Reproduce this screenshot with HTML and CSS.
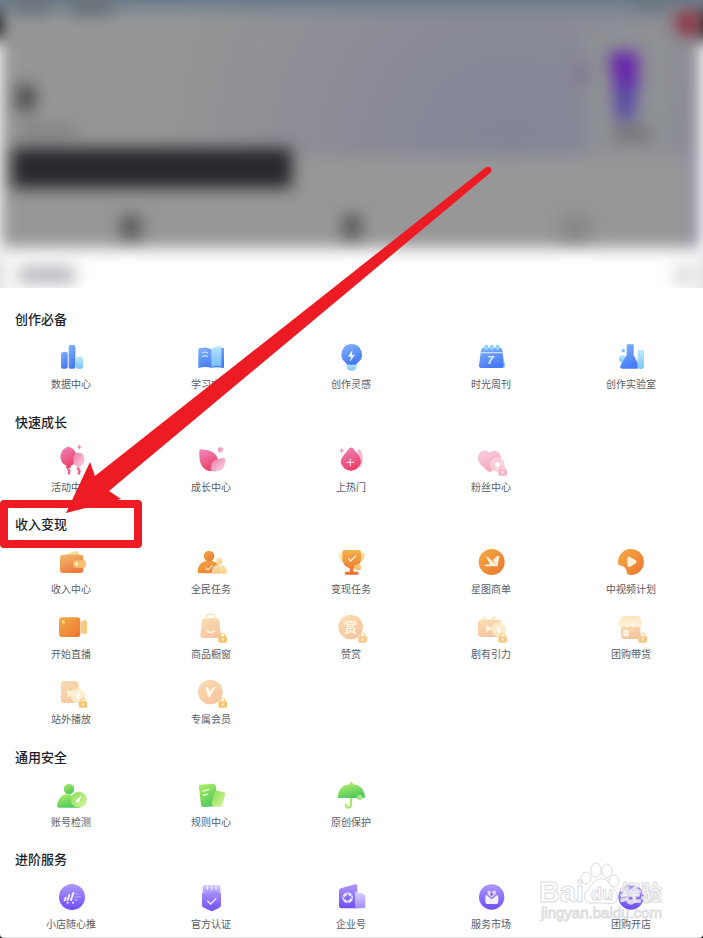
FILE: index.html
```html
<!DOCTYPE html>
<html lang="zh-CN">
<head>
<meta charset="utf-8">
<meta name="viewport" content="width=device-width, initial-scale=1">
<title>创作者服务中心</title>
<link rel="stylesheet" href="styles.css">
</head>
<body>
<svg class="defs" aria-hidden="true">
  <defs>
    <linearGradient id="blue" x1="0" y1="0" x2=".4" y2="1"><stop offset="0" stop-color="#86b4fb"/><stop offset="1" stop-color="#467bf6"/></linearGradient>
    <linearGradient id="sky" x1="0" y1="0" x2="0" y2="1"><stop offset="0" stop-color="#bfeafe"/><stop offset="1" stop-color="#79c3fc"/></linearGradient>
    <linearGradient id="pink" x1="0" y1="0" x2=".4" y2="1"><stop offset="0" stop-color="#ee8abf"/><stop offset="1" stop-color="#ee4069"/></linearGradient>
    <linearGradient id="rose" x1="0" y1="0" x2="1" y2="1"><stop offset="0" stop-color="#ee75a4"/><stop offset="1" stop-color="#fadbe8"/></linearGradient>
    <linearGradient id="blush" x1="0" y1="0" x2=".4" y2="1"><stop offset="0" stop-color="#f6cde2"/><stop offset="1" stop-color="#f6a9bd"/></linearGradient>
    <linearGradient id="orange" x1="0" y1="0" x2="1" y2="1"><stop offset="0" stop-color="#f3ac45"/><stop offset="1" stop-color="#ec7430"/></linearGradient>
    <linearGradient id="wallet" x1="0" y1="0" x2=".5" y2="1"><stop offset="0" stop-color="#efbc6d"/><stop offset="1" stop-color="#f07a42"/></linearGradient>
    <linearGradient id="cup" x1="0" y1="0" x2="0" y2="1"><stop offset="0" stop-color="#f3b34d"/><stop offset="1" stop-color="#ef6b2f"/></linearGradient>
    <linearGradient id="cream" x1="0" y1="0" x2="1" y2="1"><stop offset="0" stop-color="#fff0c7"/><stop offset="1" stop-color="#f5c875"/></linearGradient>
    <linearGradient id="peach" x1="0" y1="0" x2=".5" y2="1"><stop offset="0" stop-color="#f9deb0"/><stop offset="1" stop-color="#f5c6a2"/></linearGradient>
    <linearGradient id="pale" x1="0" y1="0" x2="0" y2="1"><stop offset="0" stop-color="#fbe4bb"/><stop offset="1" stop-color="#fff4e4"/></linearGradient>
    <linearGradient id="green" x1="0" y1="0" x2=".5" y2="1"><stop offset="0" stop-color="#b4ee67"/><stop offset="1" stop-color="#50c95f"/></linearGradient>
    <linearGradient id="lime" x1="0" y1="0" x2="1" y2="1"><stop offset="0" stop-color="#8bdc58"/><stop offset="1" stop-color="#d6f79a"/></linearGradient>
    <linearGradient id="violet" x1="0" y1="0" x2="0" y2="1"><stop offset="0" stop-color="#ad98fb"/><stop offset="1" stop-color="#6f4cf5"/></linearGradient>
    <linearGradient id="lilac" x1="0" y1="0" x2="0" y2="1"><stop offset="0" stop-color="#dcd2ff"/><stop offset="1" stop-color="#a38cfb"/></linearGradient>
    <symbol id="lock" viewBox="0 0 28 32"><path d="M8 13V8a6 6 0 0 1 12 0v5" fill="none" stroke="currentColor" stroke-width="3"/><rect x="1" y="12" width="26" height="19" rx="4" fill="currentColor"/><path d="M14 18v8M12 20h4" stroke="#fff" stroke-width="2.5"/></symbol>
    <radialGradient id="glow" gradientUnits="userSpaceOnUse" cx="510" cy="150" r="360" ><stop offset="0" stop-color="#838597"/><stop offset=".45" stop-color="#8a8b96"/><stop offset="1" stop-color="#969696"/></radialGradient>
    <linearGradient id="topbar" x1="0" y1="0" x2="0" y2="1"><stop offset="0" stop-color="#6c7c8a"/><stop offset="1" stop-color="#7e8892" stop-opacity="0"/></linearGradient>
    <filter id="soft" x="-20%" y="-20%" width="140%" height="140%" color-interpolation-filters="sRGB"><feGaussianBlur stdDeviation="8"/></filter>
    <filter id="mid" x="-10%" y="-30%" width="120%" height="160%" color-interpolation-filters="sRGB"><feGaussianBlur stdDeviation="8"/></filter>
  </defs>
</svg>

<div class="page">
<header class="backdrop" aria-hidden="true">
  <svg viewBox="0 0 703 288" preserveAspectRatio="none">
    <rect width="703" height="288" fill="#fff"/>
    <g filter="url(#soft)">
      <path d="M-30-30H733V40H-30z" fill="#101010"/>
      <path d="M-30 40H733V310H-30z" fill="#fff"/>
      <path d="M1-30H700V248H1z" fill="#979797"/>
      <path d="M1-30H700V156H1z" fill="url(#glow)"/>
      <path d="M588 26H672V156H588z" fill="#8e9195"/>
      <path d="M686 150h14V248h-14z" fill="#9090a4"/>
      <path d="M-30 256H4V310H-30zM699 256h30v54h-30z" fill="#ddd"/>
    </g>
    <rect width="703" height="24" fill="url(#topbar)"/>
    <g filter="url(#mid)">
      <rect x="12" y="148" width="280" height="40" rx="3" fill="#26282c"/>
      <path d="M17 85H35V111H17z" fill="#4a4a4a"/>
      <path d="M20 125H76V138H20z" fill="#808080"/>
      <path d="M15 0H50V12H15zM70 0H112V14H70z" fill="#666d71"/>
      <path d="M636 0H670V9H636z" fill="#68707a"/>
      <circle cx="688" cy="23" r="13" fill="#8f3040"/>
      <path d="M609 52H638V82L632 120H617L614 82z" fill="#6522ae"/>
      <path d="M617 84H634V120H617z" fill="#5348a6"/>
      <path d="M574 66H588V80H574z" fill="#806f8d"/>
      <path d="M614 126H650V141H614z" fill="#747477"/>
      <path d="M121 216H141V238H121zM343 215H361V238H343z" fill="#555"/>
      <path d="M560 216H590V238H560z" fill="#858585"/>
      <path d="M18 266H75V284H18z" fill="#b8b8be"/>
      <path d="M674 266H694V284H674z" fill="#d8d8d8"/>
    </g>
  </svg>
</header>

<main class="services">
  <section class="group">
    <h2>创作必备</h2>
    <div class="grid">
      <a class="item" href="#data"><svg viewBox="0 0 96 96"><rect x="18" y="33" width="20" height="50" rx="5" fill="url(#blue)"/><rect x="41" y="12" width="20" height="71" rx="5" fill="url(#blue)"/><rect x="63" y="47" width="21" height="36" rx="5" fill="url(#sky)"/></svg><span>数据中心</span></a>
      <a class="item" href="#learn"><svg viewBox="0 0 96 96"><path d="M10 27q0-5 5-6 22-5 34 4 12-7 38-4v60q-26-5-38 0-14-6-39 0z" fill="url(#blue)"/><path d="M49 25Q59 13 79 14v62q-20-5-30 5z" fill="url(#sky)" opacity=".9"/><path d="M22 35q8-5 16 0M22 46q8-4 16 0" fill="none" stroke="#dceaff" stroke-width="3" stroke-linecap="round"/></svg><span>学习中心</span></a>
      <a class="item" href="#ideas"><svg viewBox="0 0 96 96"><path d="M35 67h30v8q0 14-15 14T35 75z" fill="url(#sky)"/><path d="M50 9a31 31 0 0 1 18 56q-3 6-8 6H40q-5 0-8-6A31 31 0 0 1 50 9z" fill="url(#blue)"/><path d="M52 27 39 47h9l-3 15 15-21h-9z" fill="#e6f5ff"/></svg><span>创作灵感</span></a>
      <a class="item" href="#weekly"><svg viewBox="0 0 96 96"><path d="M73 22h7l10 51q1 8-7 8H73z" fill="url(#sky)"/><path d="M18 28q1-8 8-8h47q8 0 9 8l4 45q1 8-7 8H19q-8 0-7-8z" fill="url(#blue)"/><path d="M17 35h66" stroke="#d9eaff" stroke-width="3"/><g fill="#8fd3fb"><rect x="28" y="11" width="11" height="17" rx="5"/><rect x="45" y="11" width="11" height="17" rx="5"/><rect x="62" y="11" width="11" height="17" rx="5"/></g><text x="46" y="70" class="glyph glyph-seven">7</text></svg><span>时光周刊</span></a>
      <a class="item" href="#lab"><svg viewBox="0 0 96 96"><circle cx="25" cy="29" r="5" fill="#77bff8"/><circle cx="23" cy="53" r="11" fill="url(#sky)"/><path d="M35 10h21v32l15 31q3 10-6 10H22q-10 0-5-10l18-31z" fill="url(#blue)"/><path d="M68 27h19v48q0 9-10 9t-10-9z" fill="url(#sky)"/></svg><span>创作实验室</span></a>
    </div>
  </section>

  <section class="group">
    <h2>快速成长</h2>
    <div class="grid">
      <a class="item" href="#events"><svg viewBox="0 0 96 96"><path d="M41 65q-5 7 0 12t-1 14M71 65q-5 7 0 12t-1 14" fill="none" stroke="#ef6489" stroke-width="7"/><path d="M40 8a28 30 0 0 1 6 58l3 5H32l3-5A28 30 0 0 1 40 8z" fill="url(#pink)"/><path d="M72 26a18 21 0 0 1 4 41l2 4H65l2-4a18 21 0 0 1 5-41z" fill="url(#rose)"/><path d="m73 1 2 6 6 2-6 2-2 6-2-6-6-2 6-2z" fill="#ed75a4"/></svg><span>活动中心</span></a>
      <a class="item" href="#growth"><svg viewBox="0 0 96 96"><path d="M13 22q0-7 7-6 43 4 48 29 4 31-18 37-40-1-37-60z" fill="url(#pink)"/><path d="M90 42q4 38-27 40-13 3-16-8-2-30 43-32z" fill="url(#rose)"/><circle cx="77" cy="18" r="8" fill="url(#rose)"/></svg><span>成长中心</span></a>
      <a class="item" href="#hot"><svg viewBox="0 0 96 96"><path d="M68 17q8-4 12 7 8 24-3 46H64z" fill="#f5bdd0"/><path d="M43 13q5-5 11 0c8 11 24 25 24 41a31 32 0 0 1-61 0c0-15 18-29 26-41z" fill="url(#pink)"/><path d="M46 45v20M36 55h20" stroke="#ffd8e8" stroke-width="3.5" stroke-linecap="round"/><path d="m20 11 2 7 6 2-6 2-2 7-2-7-6-2 6-2z" fill="#ed8caa"/></svg><span>上热门</span></a>
      <a class="item" href="#fans"><svg viewBox="0 0 96 96"><path d="M44 26c17-14 35 0 34 18-2 18-19 30-29 38q-5 4-10 0C27 71 9 60 9 42c0-19 20-30 35-16z" fill="url(#blush)"/><circle cx="67" cy="62" r="22" fill="#f9cfdb" opacity=".9"/><circle cx="67" cy="62" r="7" fill="#fff"/><use href="#lock" x="69" y="64" width="28" height="32" color="#f8b5c4"/></svg><span>粉丝中心</span></a>
    </div>
  </section>

  <section class="group">
    <h2 class="marked">收入变现</h2>
    <div class="grid">
      <a class="item" href="#income"><svg viewBox="0 0 96 96"><path d="m25 28 35-13q6-2 9 4l5 12H25z" fill="url(#cream)"/><rect x="15" y="26" width="70" height="55" rx="9" fill="url(#wallet)"/><rect x="54" y="43" width="39" height="22" rx="8" fill="#f6bf72"/><circle cx="65" cy="54" r="5" fill="#fff0cf"/></svg><span>收入中心</span></a>
      <a class="item" href="#tasks"><svg viewBox="0 0 96 96"><path d="M34 44h16q26 7 26 33 0 5-5 5H13q-5 0-5-5 0-28 26-33z" fill="url(#orange)"/><circle cx="42" cy="30" r="16" fill="url(#orange)"/><circle cx="72" cy="45" r="10" fill="url(#cream)"/><path d="M50 80q2-24 22-25 24 3 24 25 0 3-4 3H53z" fill="url(#cream)" opacity=".9"/><path d="m31 65 8 7 14-14" fill="none" stroke="#ffe0b9" stroke-width="4"/></svg><span>全民任务</span></a>
      <a class="item" href="#earn"><svg viewBox="0 0 96 96"><path d="M24 20H11q-1 25 19 31zM76 20h13q1 25-19 31z" fill="url(#cream)"/><path d="M22 18q0-6 6-6h44q6 0 6 6v21q-1 20-22 28v10h10q5 0 5 5t-5 4H34q-5 0-5-4 0-5 5-5h10V67Q23 60 22 39z" fill="url(#cup)"/><path d="m39 37 8 8 15-15" fill="none" stroke="#fff0d7" stroke-width="4"/><path d="m69 52 4 5 6 1-2 6 2 6-6 1-5 5-4-5-6-1 1-6-2-6 7-1z" fill="#f9c66e"/></svg><span>变现任务</span></a>
      <a class="item" href="#star"><svg viewBox="0 0 96 96"><circle cx="50" cy="48" r="39" fill="url(#orange)"/><path d="M34 34q0-4 4-2l24 23 3-23 6-3q3 0 2 3l-5 24 1 5H29q-2-4 2-5l14-2z" fill="#fff0dc"/><path d="m53 42 15-13 3 1-7 27z" fill="#fff0dc"/></svg><span>星图商单</span></a>
      <a class="item" href="#video"><svg viewBox="0 0 96 96"><path d="M9 51a39 39 0 1 1 38 36q-10 0-12-8 0-17-17-20-8 0-9-8z" fill="url(#orange)"/><path d="M37 36q0-6 6-4l18 10q7 5 0 11L45 62q-9 4-8-7z" fill="#fff0dc"/></svg><span>中视频计划</span></a>
      <a class="item" href="#live"><svg viewBox="0 0 96 96"><path d="m78 32 12-5q6 0 6 6v31q0 7-7 5l-11-4z" fill="#f6cb80"/><rect x="12" y="19" width="64" height="59" rx="10" fill="url(#orange)"/><circle cx="25" cy="33" r="5" fill="#fbd18a"/></svg><span>开始直播</span></a>
      <a class="item" href="#shop"><svg viewBox="0 0 96 96"><path d="M21 29q1-7 9-7h35q7 0 8 7l5 43q1 9-8 9H24q-9 0-8-9z" fill="url(#peach)"/><path d="M33 32v-9a14 14 0 0 1 28 0v9" fill="none" stroke="#fae3b7" stroke-width="5"/><path d="M36 59q11 10 23 0" fill="none" stroke="#fff6e8" stroke-width="4" stroke-linecap="round"/><use href="#lock" x="69" y="64" width="28" height="32" color="#f6c66f"/></svg><span>商品橱窗</span></a>
      <a class="item" href="#tips"><svg viewBox="0 0 96 96"><circle cx="47" cy="48" r="37" fill="url(#peach)"/><text x="47" y="63" class="glyph glyph-reward">赏</text><use href="#lock" x="69" y="64" width="28" height="32" color="#f9c887"/></svg><span>赞赏</span></a>
      <a class="item" href="#drama"><svg viewBox="0 0 96 96"><path d="M20 18q3-5 8 0l10 13H28zM44 30l11-14q6-2 7 4l-8 12z" fill="#fce7c1"/><rect x="9" y="26" width="69" height="52" rx="9" fill="url(#peach)"/><path d="m33 41 22 11-22 11z" fill="#fff0d6"/><circle cx="71" cy="55" r="22" fill="#fcebc8" opacity=".93"/><text x="71" y="65" class="glyph glyph-yuan">¥</text><use href="#lock" x="69" y="64" width="28" height="32" color="#f9c887"/></svg><span>剧有引力</span></a>
      <a class="item" href="#groupbuy"><svg viewBox="0 0 96 96"><rect x="18" y="38" width="58" height="46" rx="8" fill="url(#peach)"/><path d="M17 23q3-8 11-8h38q8 0 11 8 12 24-2 26-7 0-10-4-4 4-9 4t-9-4q-4 4-9 4t-10-4q-5 4-10 4-17-3-1-26z" fill="url(#pale)"/><rect x="25" y="57" width="17" height="19" rx="4" fill="#fff2dc"/><use href="#lock" x="69" y="64" width="28" height="32" color="#f9c887"/></svg><span>团购带货</span></a>
      <a class="item" href="#offsite"><svg viewBox="0 0 96 96"><rect x="18" y="15" width="53" height="66" rx="9" fill="url(#peach)"/><path d="M36 39q9 11 21 1v24q-13-9-21 2z" fill="#fff0d6"/><circle cx="69" cy="60" r="22" fill="#fcefce" opacity=".95"/><text x="69" y="69" class="glyph glyph-yuan">¥</text><use href="#lock" x="70" y="64" width="28" height="32" color="#f6c66f"/></svg><span>站外播放</span></a>
      <a class="item" href="#member"><svg viewBox="0 0 96 96"><circle cx="46" cy="48" r="37" fill="url(#peach)"/><path d="M31 35q6-5 10 3l4 9q7-15 19-14-7 5-18 29-4 4-7-1z" fill="#fff8eb"/><use href="#lock" x="69" y="64" width="28" height="32" color="#f6c66f"/></svg><span>专属会员</span></a>
    </div>
  </section>

  <section class="group">
    <h2>通用安全</h2>
    <div class="grid">
      <a class="item" href="#account"><svg viewBox="0 0 96 96"><path d="M33 45q20 0 42 23v18H12q-6 0-6-6 3-28 27-35z" fill="url(#green)"/><circle cx="42" cy="30" r="16" fill="url(#green)"/><circle cx="71" cy="62" r="23" fill="url(#lime)" stroke="#ace968" stroke-width="2"/><path d="m80 49-16 14a5 5 0 1 0 9 4z" fill="#fff"/></svg><span>账号检测</span></a>
      <a class="item" href="#rules"><svg viewBox="0 0 96 96"><path d="M12 26q-2-8 6-9l30-3q14 0 15 10l5 51q0 7-8 7l-34 2q-7 0-8-7z" fill="url(#green)"/><path d="M59 40q2-6 8-5l18 4q7 2 5 9l-8 29q-2 8-10 7l-16-3q-8-2-6-9z" fill="url(#lime)"/><path d="m24 36 17-4M25 49l12-3" stroke="#e6ffcc" stroke-width="4" stroke-linecap="round"/></svg><span>规则中心</span></a>
      <a class="item" href="#original"><svg viewBox="0 0 96 96"><circle cx="49" cy="14" r="5" fill="#a9e77f"/><path d="M48 52v25q-1 9-8 9t-7-8" fill="none" stroke="#a7e66f" stroke-width="7" stroke-linecap="round"/><path d="M8 54Q12 16 49 16t41 38q0 3-4 3H12q-4 0-4-3z" fill="url(#green)"/><circle cx="74" cy="55" r="8" fill="#a7e77b"/></svg><span>原创保护</span></a>
    </div>
  </section>

  <section class="group">
    <h2>进阶服务</h2>
    <div class="grid">
      <a class="item" href="#promote"><svg viewBox="0 0 96 96"><circle cx="51" cy="48" r="39" fill="url(#violet)"/><path d="m32 50-3 8M43 42l-5 15M55 36 48 57" stroke="#f1eeff" stroke-width="6" stroke-linecap="round"/><path d="M61 39h9M59 48h18M57 57h11" stroke="#c7baff" stroke-width="3"/><circle cx="38" cy="65" r="3" fill="#f1eeff"/><circle cx="54" cy="65" r="3" fill="#f1eeff"/></svg><span>小店随心推</span></a>
      <a class="item" href="#verify"><svg viewBox="0 0 96 96"><path d="m39 29 11-3 11 3q8 4 17 6v39q-1 5-11 9l-17 8-17-8q-11-4-12-9V35q9-1 18-6z" fill="url(#violet)"/><path d="M23 16q0-4 4-4h45q4 0 4 4v17q-12-2-17 3H40q-6-5-17-3z" fill="url(#lilac)"/><path d="M37 16v10M50 16v10M63 16v10" stroke="#fff" stroke-width="3"/><path d="m37 59 10 10 17-17" fill="none" stroke="#efebff" stroke-width="4"/></svg><span>官方认证</span></a>
      <a class="item" href="#company"><svg viewBox="0 0 96 96"><path d="M12 29q0-5 5-7l43-12q7-1 7 5v67H19q-7 0-7-7z" fill="url(#violet)"/><path d="M60 35q0-4 4-3l21 6q6 2 6 8v30q0 6-6 6H60z" fill="url(#lilac)"/><circle cx="38" cy="50" r="12" fill="none" stroke="#eeeaff" stroke-width="8"/><path d="m23 47 8 3-5 7M53 53l-8-4 5-6M36 34l4 8M40 66l-4-8" fill="none" stroke="#8d6ef8" stroke-width="3"/></svg><span>企业号</span></a>
      <a class="item" href="#market"><svg viewBox="0 0 96 96"><circle cx="50" cy="48" r="38" fill="url(#violet)"/><path d="M31 47q0-5 5-4l14 12 15-12q5-1 5 4v16q0 6-6 6H37q-6 0-6-6z" fill="#f2edff"/><path d="M38 28q7 3 12 5 7-4 12-5v12L50 50 38 40z" fill="#e1d8ff"/><path d="m50 34 5 6-5 6-5-6z" fill="#7c5cf6"/></svg><span>服务市场</span></a>
      <a class="item" href="#openshop"><svg viewBox="0 0 96 96"><circle cx="48" cy="48" r="38" fill="url(#violet)"/><path d="M28 30h40l5 16H23z" fill="#f2edff"/><circle cx="48" cy="56" r="12" fill="none" stroke="#d9ceff" stroke-width="6"/></svg><span>团购开店</span></a>
    </div>
  </section>
</main>

<svg class="arrow" viewBox="0 0 500 520" aria-hidden="true"><path d="M66 513 90 462 95 476 485 168Q488 165 491 168 492 171 490 173L109 491 121 499z" fill="#ed1c24"/></svg>

<svg class="watermark" viewBox="0 0 130 64" role="img" aria-label="Baidu 经验">
  <g class="wm-shape"><ellipse cx="48" cy="19" rx="5" ry="6"/><ellipse cx="58" cy="11" rx="5" ry="7"/><ellipse cx="69" cy="12" rx="5" ry="7"/><ellipse cx="76" cy="22" rx="5" ry="6"/><path d="M54 25q9-11 18 0 3 5 7 9 3 13-11 10H58q-14 2-11-10 4-4 7-9z"/></g>
  <text class="wm-name" x="1" y="43">Bai</text>
  <text class="wm-du" x="53" y="41">du</text>
  <text class="wm-cn" x="82" y="41">经验</text>
  <text class="wm-url" x="3" y="59">jingyan.baidu.com</text>
</svg>
</div>
</body>
</html>
```
FILE: styles.css
```css
*,
*::after {
  box-sizing: border-box;
}

html {
  background: #111;
}

body {
  margin: 0;
  font-family: "Noto Sans CJK SC", "Noto Sans", sans-serif;
}

.defs {
  position: absolute;
  width: 0;
  height: 0;
}

.page {
  position: relative;
  display: flex;
  flex-direction: column;
  min-height: 100vh;
  background: #fff;
  border-bottom: 1px solid #e6e6e8;
  border-radius: 0 0 4px 4px;
  overflow: hidden;
}

.backdrop svg {
  display: block;
  width: 100%;
  height: 288px;
}

/* Service groups share the remaining height evenly */
.services {
  flex: 1;
  display: flex;
  flex-direction: column;
  justify-content: space-between;
  gap: 19px;
  padding: 21px 2px 5px 1px;
}

.group h2 {
  position: relative;
  margin: 0 0 12px;
  padding-left: 14px;
  color: #1d1f2c;
  font-size: 13px;
  font-weight: 500;
  line-height: 20px;
}

.grid {
  display: grid;
  grid-template-columns: repeat(5, 1fr);
  row-gap: 14px;
}

.item {
  display: flex;
  flex-direction: column;
  align-items: center;
  gap: 3px;
  color: #5a5c66;
  font-size: 10px;
  line-height: 16px;
  text-decoration: none;
}

.item svg {
  width: 32px;
  height: 32px;
}

.glyph {
  text-anchor: middle;
  font-weight: 700;
}

.glyph-seven {
  fill: #e2f0ff;
  font-family: "Liberation Sans", sans-serif;
  font-size: 34px;
  font-style: italic;
}

.glyph-reward {
  fill: #fff5e5;
  font-size: 40px;
}

.glyph-yuan {
  fill: #fff;
  font-size: 28px;
}

/* Red frame around the highlighted heading */
.marked::after {
  content: "";
  position: absolute;
  top: -14px;
  left: -1px;
  width: 142px;
  height: 48px;
  border: 8px solid #ed1c24;
  border-radius: 4px;
}

.arrow {
  position: absolute;
  top: 0;
  left: 0;
  width: 500px;
  height: 520px;
  pointer-events: none;
}

.watermark {
  position: absolute;
  right: 35px;
  bottom: 14px;
  width: 130px;
  height: 64px;
  pointer-events: none;
}

.wm-shape,
.watermark text {
  fill: #fff;
  fill-opacity: 0.75;
  stroke: #dcdcde;
  stroke-width: 1;
}

.watermark text {
  font-family: "Liberation Sans", "Noto Sans CJK SC", sans-serif;
  font-weight: 700;
}

.watermark .wm-name {
  font-size: 29px;
}

.watermark .wm-du {
  font-size: 18px;
}

.watermark .wm-cn {
  font-size: 21px;
}

.watermark .wm-url {
  font-size: 15px;
  font-weight: 400;
}
```
